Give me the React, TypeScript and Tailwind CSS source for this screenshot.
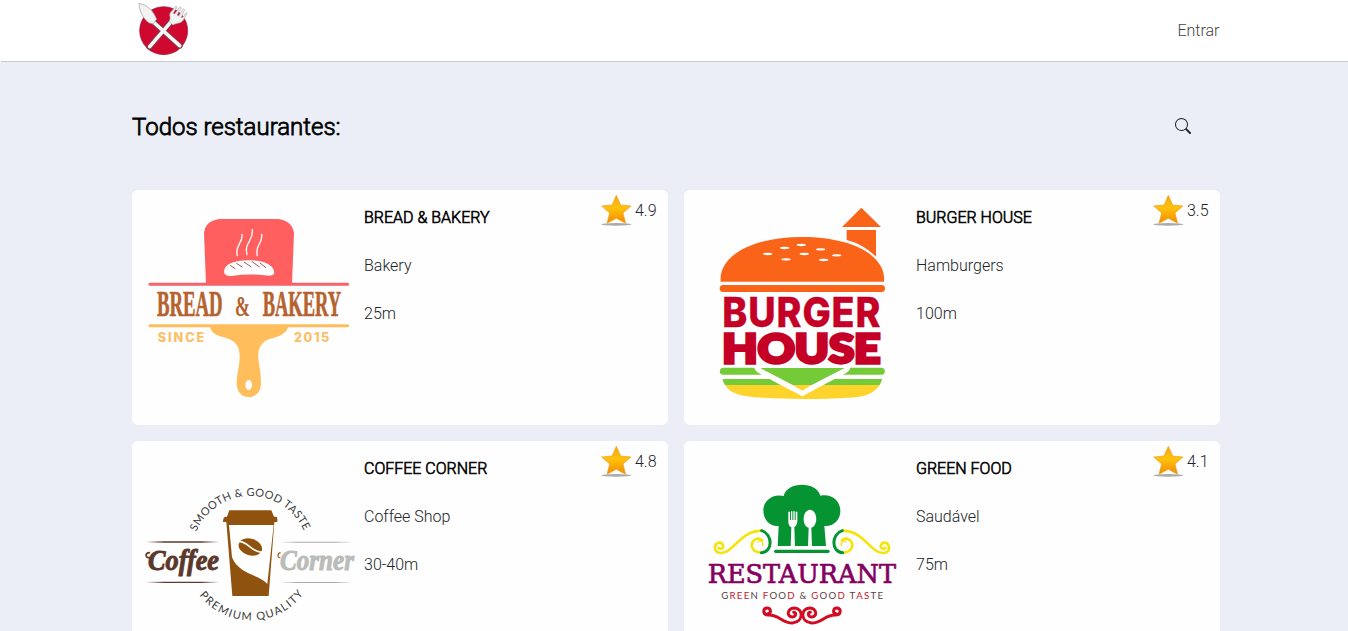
import type { ReactNode } from "react";
import { BsSearch } from "react-icons/bs";

function BrandMark() {
  return (
    <svg viewBox="43 3 180 180" className="h-[60px] w-[60px]" aria-hidden="true">
      <circle cx="129" cy="92" r="72" fill="#cf0830" stroke="#8f1530" strokeWidth="2" />
      <g stroke="#7d4050" strokeWidth="16" strokeLinecap="round">
        <path d="M100 68 178 138M152 64 86 142" />
      </g>
      <g stroke="#f6f6f6" strokeWidth="11" strokeLinecap="round" fill="none">
        <path d="M98 66 177 137" />
        <path d="M155 61 87 140" />
      </g>
      <path d="M55 10C78 14 98 31 108 58L97 72 86 69C68 58 57 37 55 10Z" fill="#f3f3f3" stroke="#999" strokeWidth="2" />
      <path d="M149 38 166 18 169 21 157 40 162 42 178 20 182 23 169 45 174 48 188 26 192 29 181 53 188 51 197 37 199 41 188 60C180 72 168 68 157 75L145 64C153 54 144 47 149 38Z" fill="#f3f3f3" stroke="#aaa" strokeWidth="2" />
    </svg>
  );
}

function BreadLogo() {
  return (
    <svg viewBox="0 0 696 705" className="h-[235px] w-[232px] shrink-0" aria-hidden="true">
      <path d="M222 282 216 130Q218 94 262 87H440Q482 94 486 130L480 282Z" fill="#ff5f5f" />
      <path d="M54 283H647" stroke="#f8616a" strokeWidth="9" strokeLinecap="round" />
      <path d="M277 250C272 226 300 211 351 211S430 228 426 252Q420 260 397 256 350 250 304 257 281 260 277 250Z" fill="#fff" />
      <path d="m294 226 16 10M313 220l18 11M336 216l22 15M359 214l24 17M384 219l18 14" stroke="#9b5d5d" strokeWidth="3" />
      <path d="M330 133C334 160 307 165 316 197M361 119C365 155 336 155 345 194M389 133C394 160 367 165 376 197" fill="none" stroke="#fff" strokeWidth="4" strokeLinecap="round" />
      <g fill="#b5622f" stroke="#b5622f" strokeWidth="2" strokeLinejoin="round" fontFamily="Liberation Serif, serif" fontWeight="700" fontSize="105">
        <text x="75" y="379" textLength="197" lengthAdjust="spacingAndGlyphs">BREAD</text>
        <text x="309" y="378" fontSize="90" strokeWidth="0" textLength="45" lengthAdjust="spacingAndGlyphs">&amp;</text>
        <text x="392" y="379" textLength="235" lengthAdjust="spacingAndGlyphs">BAKERY</text>
      </g>
      <path d="M54 407H647" stroke="#ffbd5b" strokeWidth="9" strokeLinecap="round" />
      <path d="M233 408H469C464 432 440 441 414 446 385 456 376 480 379 508 384 540 387 555 387 580 387 606 371 621 350 621S314 606 314 580C314 552 323 530 323 497 323 467 308 450 280 443 251 436 237 428 233 408Z" fill="#ffbd5b" />
      <ellipse cx="350" cy="585" rx="10" ry="15" fill="#fff" />
      <g fill="#fdbf66" fontFamily="Inter, sans-serif" fontWeight="800" fontSize="38">
        <text x="77" y="457" textLength="140">SINCE</text>
        <text x="486" y="457" textLength="106">2015</text>
      </g>
    </svg>
  );
}

function BurgerLogo() {
  return (
    <svg viewBox="-48 0 696 705" className="h-[235px] w-[232px] shrink-0" aria-hidden="true">
      <path d="M484 53 543 111H426ZM440 120H528V200C502 175 474 159 440 150Z" fill="#fa6418" />
      <path d="M62 275C55 196 159 141 307 141S559 196 552 275Z" fill="#fa6418" />
      <rect x="59" y="285" width="496" height="21" rx="10.5" fill="#fa6418" />
      <g fill="#fff">
        <ellipse cx="203" cy="192" rx="14" ry="3.5" />
        <ellipse cx="254" cy="174" rx="14" ry="3.5" />
        <ellipse cx="304" cy="165" rx="14" ry="3.5" />
        <ellipse cx="362" cy="178" rx="14" ry="3.5" />
        <ellipse cx="313" cy="192" rx="14" ry="3.5" />
        <ellipse cx="258" cy="208" rx="14" ry="3.5" />
        <ellipse cx="371" cy="210" rx="14" ry="3.5" />
        <ellipse cx="410" cy="196" rx="14" ry="3.5" />
      </g>
      <g fill="#c40027" stroke="#c40027">
        <text x="67" y="410" fontFamily="Inter, sans-serif" fontSize="124" fontWeight="800" strokeWidth="1" letterSpacing="3" textLength="477" lengthAdjust="spacingAndGlyphs">BURGER</text>
        <text x="67" y="519" fontFamily="Lato, sans-serif" fontSize="119" fontWeight="900" strokeWidth="10" textLength="474" lengthAdjust="spacingAndGlyphs">HOUSE</text>
      </g>
      <g fill="#75cb37">
        <path d="M70 533H163Q165 545 186 554H70A10.500 10.500 0 0 1 70 533ZM451 533H544A10.500 10.500 0 0 1 544 554H428Q449 545 451 533Z" />
        <path d="M181 534H434L335 585H278ZM68 567H209L242 585H75Q69 577 68 567ZM404 567H546Q544 578 539 585H370Z" />
      </g>
      <path d="M75 585H242L307 619 370 585H539C524 608 500 621 448 623 357 628 257 628 166 622 113 617 88 607 75 585ZM278 585H335L307 602Z" fill="#fed42c" />
    </svg>
  );
}

function CoffeeLogo() {
  return (
    <svg viewBox="0 0 696 705" className="h-[235px] w-[232px] shrink-0" aria-hidden="true">
      <defs>
        <path id="coffee-arc-top" d="M193 272A176 176 0 0 1 517 272" />
        <path id="coffee-arc-bottom" d="M202 463A196 196 0 0 0 515 457" />
        <linearGradient id="coffee-rule-dark">
          <stop offset="0" stopColor="#5c3a2c" stopOpacity="0" />
          <stop offset=".25" stopColor="#5c3a2c" />
          <stop offset=".75" stopColor="#5c3a2c" />
          <stop offset="1" stopColor="#5c3a2c" stopOpacity="0" />
        </linearGradient>
        <linearGradient id="coffee-rule-light">
          <stop offset="0" stopColor="#aaa" stopOpacity="0" />
          <stop offset=".25" stopColor="#aaa" />
          <stop offset=".75" stopColor="#aaa" />
          <stop offset="1" stopColor="#aaa" stopOpacity="0" />
        </linearGradient>
      </defs>
      <g fill="#3c3c3c" fontFamily="Lato, sans-serif" fontWeight="400" fontSize="33">
        <text textLength="408"><textPath href="#coffee-arc-top">SMOOTH &amp; GOOD TASTE</textPath></text>
        <text textLength="360"><textPath href="#coffee-arc-bottom">PREMIUM QUALITY</textPath></text>
      </g>
      <path d="M42 301H262V305H42ZM42 422H262V426H42Z" fill="url(#coffee-rule-dark)" />
      <path d="M442 302H664V305H442ZM442 423H664V426H442Z" fill="url(#coffee-rule-light)" />
      <path d="M292 208H418L426 227H433Q437 228 436 243H427L410 465H301L283 243H273Q273 228 280 227H285Z" fill="#90530f" />
      <path d="M291 252H425L406 429C384 401 320 401 300 349Z" fill="#fff" />
      <g transform="rotate(16 355 318)">
        <ellipse cx="355" cy="318" rx="36" ry="25" fill="#90530f" />
        <path d="M318 312C340 302 365 334 392 323" fill="none" stroke="#fff" strokeWidth="5" />
      </g>
      <g fontFamily="Liberation Serif, serif" fontStyle="italic" fontWeight="700" fontSize="88" strokeLinejoin="round">
        <path d="M60 350C38 354 37 334 54 335" fill="none" stroke="#5b382b" strokeWidth="5" />
        <text x="48" y="388" fill="#5b382b" stroke="#5b382b" strokeWidth="3" textLength="213" lengthAdjust="spacingAndGlyphs">Coffee</text>
        <path d="M445 350C435 351 436 336 446 335" fill="none" stroke="#a96a27" strokeWidth="4" />
        <text x="444" y="388" fill="#b9bcb9" stroke="#b9bcb9" strokeWidth="3" textLength="222" lengthAdjust="spacingAndGlyphs">Corner</text>
      </g>
    </svg>
  );
}

function GreenLogo() {
  return (
    <svg viewBox="-18 -87 696 705" className="h-[235px] w-[232px] shrink-0" aria-hidden="true">
      <path d="M263 228 266 168C239 171 220 149 220 121 220 91 249 70 281 78 291 33 380 33 391 77 427 70 451 94 451 123 451 150 431 170 403 168L408 228Z" fill="#069433" />
      <path d="M257 244H414" stroke="#069433" strokeWidth="10" strokeLinecap="round" />
      <g fill="#fff">
        <path d="M295 125h5v25h3v-26h4v26h3v-26h4v26h3v-25h5v30q-1 12-9 17l2 58h-13l2-58q-9-5-9-17Z" />
        <path d="M360 119c24 2 25 48 4 54l2 58h-12l2-58c-21-6-20-52 4-54Z" />
      </g>
      <g fill="none" strokeWidth="8" strokeLinecap="round">
        <g id="green-scroll">
          <path d="M86 234C96 240 102 232 99 225 93 213 76 217 75 232 74 250 98 255 117 240 145 219 163 184 213 182" stroke="#f4e40b" />
          <path d="M204 216C210 208 221 216 218 227" stroke="#f4e40b" strokeWidth="4" />
          <path d="M213 248C190 246 181 231 187 217 193 205 207 203 216 210" stroke="#f4e40b" />
          <path d="M215 182C249 192 249 247 214 248" stroke="#069433" strokeWidth="9" />
        </g>
        <use href="#green-scroll" transform="translate(672 0) scale(-1 1)" />
      </g>
      <text x="53" y="338" fill="#85005f" stroke="#85005f" strokeWidth="2" fontWeight="400" fontFamily="DejaVu Serif, serif" fontSize="76" textLength="565" lengthAdjust="spacingAndGlyphs">RESTAURANT</text>
      <text x="94" y="387" fill="#574442" fontFamily="Lato, sans-serif" fontWeight="400" fontSize="29" textLength="485">
        G<tspan fill="#c3162b">REE</tspan>N <tspan fill="#c3162b">F</tspan>OO<tspan fill="#c3162b">D</tspan> &amp; <tspan fill="#c3162b">G</tspan>OO<tspan fill="#c3162b">D</tspan> T<tspan fill="#c3162b">AS</tspan>TE
      </text>
      <g fill="none" stroke="#d20b22" strokeWidth="9" strokeLinecap="round">
        <g id="red-scroll">
          <path d="M233 431C246 431 243 413 230 414 217 417 219 435 235 435 265 433 277 459 307 459 343 455 340 414 313 414 291 416 289 440 307 441 320 439 319 426 311 427" />
        </g>
        <use href="#red-scroll" transform="translate(672 0) scale(-1 1)" />
      </g>
    </svg>
  );
}

function Star() {
  return (
    <svg viewBox="0 0 96 96" className="h-8 w-8" aria-hidden="true">
      <defs>
        <linearGradient id="star-fill" x1="0" y1="0" x2="0" y2="1">
          <stop offset="0" stopColor="#f5a90c" />
          <stop offset=".45" stopColor="#ffc20c" />
          <stop offset="1" stopColor="#f08a00" />
        </linearGradient>
      </defs>
      <ellipse cx="49" cy="88" rx="46" ry="4" fill="#aaa" />
      <path d="M49 1 62 30 93 33 69 54 77 85 49 70 21 85 29 54 5 33 36 30Z" fill="url(#star-fill)" stroke="#eea024" strokeWidth="2" strokeLinejoin="round" />
    </svg>
  );
}

interface Restaurant {
  name: string;
  category: string;
  time: string;
  rating: string;
  logo: ReactNode;
}

const restaurants: Restaurant[] = [
  { name: "BREAD & BAKERY", category: "Bakery", time: "25m", rating: "4.9", logo: <BreadLogo /> },
  { name: "BURGER HOUSE", category: "Hamburgers", time: "100m", rating: "3.5", logo: <BurgerLogo /> },
  { name: "COFFEE CORNER", category: "Coffee Shop", time: "30-40m", rating: "4.8", logo: <CoffeeLogo /> },
  { name: "GREEN FOOD", category: "Saudável", time: "75m", rating: "4.1", logo: <GreenLogo /> },
];

function RestaurantCard({ name, category, time, rating, logo }: Restaurant) {
  return (
    <article className="flex h-[235px] rounded-md bg-[#fefefe]">
      {logo}
      <div className="flex flex-1 flex-col gap-6 pt-4">
        <h2 className="text-black [-webkit-text-stroke:0.6px_black]">{name}</h2>
        <p>{category}</p>
        <p>{time}</p>
      </div>
      <div className="mt-[5px] flex h-8 items-center gap-[2.5px] pr-[11.5px]">
        <Star />
        <span>{rating}</span>
      </div>
    </article>
  );
}

export default function App() {
  return (
    <div className="h-screen overflow-hidden bg-[#ebeef6] font-['Roboto',sans-serif] text-base font-light text-[#212529]">
      <header className="h-[62px] bg-white pl-px">
        <div className="flex h-full items-center justify-between border-b border-[#c8cbd0] pl-[134px] pr-[128.5px]">
          <BrandMark />
          <a href="#entrar" className="text-[#444]">Entrar</a>
        </div>
      </header>
      <main className="ml-[132px] w-[1088px]">
        <div className="flex h-32 items-center justify-between pr-[29px]">
          <h1 className="pt-px text-2xl text-black [-webkit-text-stroke:0.8px_black]">Todos restaurantes:</h1>
          <BsSearch className="h-4 w-4" />
        </div>
        <section className="grid grid-cols-2 gap-4">
          {restaurants.map((restaurant) => (
            <RestaurantCard key={restaurant.name} {...restaurant} />
          ))}
        </section>
      </main>
    </div>
  );
}
